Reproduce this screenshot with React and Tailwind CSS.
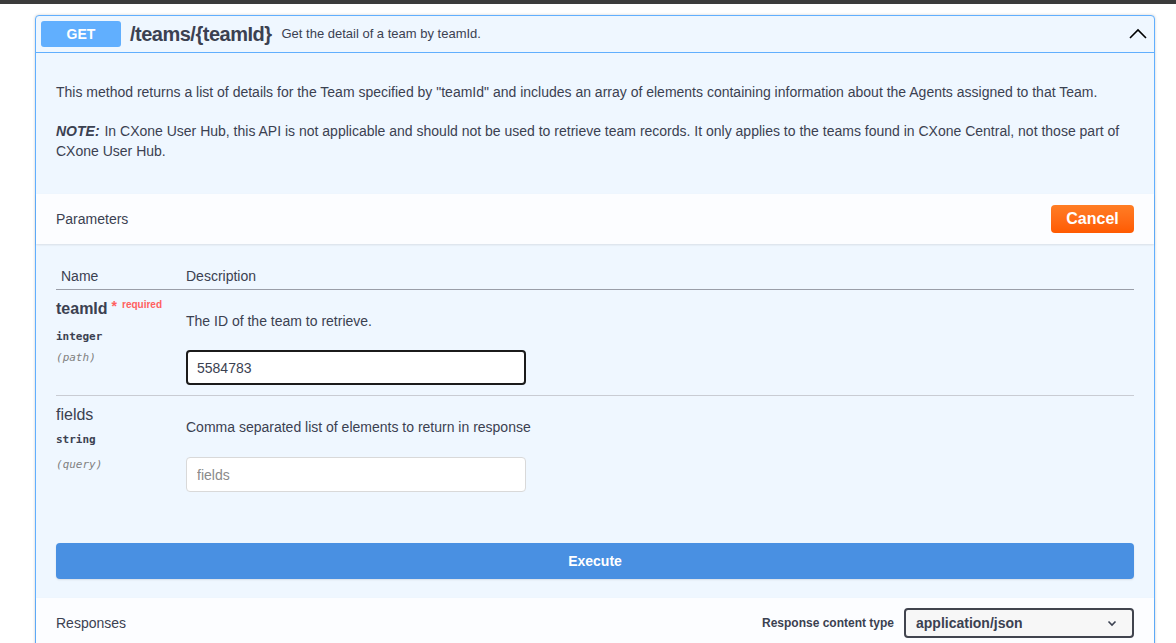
import { useState } from "react";

const ChevronUp = () => (
    <svg width="20" height="20" viewBox="0 0 20 20" className="text-black">
        <path d="M2 14 L10 6 L18 14" fill="none" stroke="currentColor" strokeWidth="1.6" />
    </svg>
);

const ChevronDown = () => (
    <svg width="12" height="12" viewBox="0 0 12 12" className="text-[#3b4151]">
        <path d="M2.5 4.5 L6 8 L9.5 4.5" fill="none" stroke="currentColor" strokeWidth="1.6" />
    </svg>
);

const ParamRow = ({ name, required, type, where, desc, children, border, typeGap, whereGap, inputGap }) => (
    <div className={`flex ${border ? "border-b border-[#c9ccd3]" : ""}`}>
        <div className="w-[130px] shrink-0 pt-[9px] pb-[12px]">
            <div className="flex items-start">
                <span
                    className={`text-[16px] leading-[20px] text-[#3b4151] ${
                        required ? "font-bold" : ""
                    }`}
                >
                    {name}
                </span>
                {required && (
                    <span className="ml-[4px] text-[#ff6060] text-[10px] leading-[10px] font-bold flex">
                        <span className="text-[14px] leading-[14px]">*</span>
                        <span className="ml-[5px] mt-[1px]">required</span>
                    </span>
                )}
            </div>
            <div
                className={`${typeGap} font-['DejaVu_Sans_Mono',monospace] text-[11px] font-bold text-[#3b4151]`}
            >
                {type}
            </div>
            <div
                className={`${whereGap} font-['DejaVu_Sans_Mono',monospace] text-[11px] italic text-[#808080]`}
            >
                ({where})
            </div>
        </div>
        <div className="flex-1 pt-[22px] pb-[10px]">
            <p className="text-[14px] leading-[18px] text-[#3b4151]">{desc}</p>
            <div className={inputGap}>{children}</div>
        </div>
    </div>
);

export default function App() {
    const [teamId, setTeamId] = useState("5584783");
    const [fields, setFields] = useState("");

    return (
        <div className="min-h-screen bg-white font-['Liberation_Sans',Arial,sans-serif] text-[#3b4151]">
            <div className="h-[4px] bg-[#3b3b3b]" />
            <div className="pt-[11px] pl-[35px] w-[1155px]">
                <div className="border border-[#61affe] rounded-[4px] bg-[#eff7ff] shadow-[0_0_3px_rgba(0,0,0,0.19)]">
                    {/* summary */}
                    <div className="flex items-center h-[37px] px-[5px] border-b border-[#61affe]">
                        <div className="w-[80px] h-[26px] rounded-[3px] bg-[#61affe] text-white text-[14px] font-bold flex items-center justify-center">
                            GET
                        </div>
                        <span className="ml-[9px] text-[20px] font-bold tracking-[-0.5px] text-[#3b4151]">
                            /teams/{"{teamId}"}
                        </span>
                        <span className="ml-[10px] text-[13px] text-[#3b4151]">
                            Get the detail of a team by teamId.
                        </span>
                        <div className="ml-auto mr-[1px] flex items-center">
                            <ChevronUp />
                        </div>
                    </div>

                    {/* description */}
                    <div className="px-[20px] pt-[29px] pb-[33px] text-[14px] leading-[20px] text-[#3b4151]">
                        <p>
                            This method returns a list of details for the Team specified by "teamId" and includes an array of elements containing information about the Agents assigned to that Team.
                        </p>
                        <p className="mt-[19px]">
                            <b className="italic pr-[1px]">NOTE:</b> In CXone User Hub, this API is not applicable and should not be used to retrieve team records. It only applies to the teams found in CXone Central, not those part of CXone User Hub.
                        </p>
                    </div>

                    {/* parameters header */}
                    <div className="flex items-center justify-between h-[50px] px-[20px] bg-[#fcfdff] shadow-[0_1px_2px_rgba(0,0,0,0.1)]">
                        <span className="text-[14px] text-[#3b4151]">Parameters</span>
                        <button className="w-[83px] h-[28px] rounded-[4px] bg-gradient-to-b from-[#ff7d24] to-[#ff5a00] text-white text-[16px] font-bold">
                            Cancel
                        </button>
                    </div>

                    {/* parameters table */}
                    <div className="px-[20px] pt-[22px]">
                        <div className="flex border-b border-[#9a9ea8] pb-[2px] text-[14px] text-[#3b4151]">
                            <div className="w-[130px] pl-[5px]">Name</div>
                            <div>Description</div>
                        </div>
                        <ParamRow
                            name="teamId"
                            required
                            type="integer"
                            where="path"
                            desc="The ID of the team to retrieve."
                            border
                            typeGap="mt-[10px]"
                            whereGap="mt-[4px]"
                            inputGap="mt-[20px]"
                        >
                            <input
                                value={teamId}
                                onChange={(e) => setTeamId(e.target.value)}
                                className="w-[340px] h-[35px] px-[9px] border-2 border-[#1b1b1b] rounded-[4px] bg-white text-[14px] text-[#3b4151] outline-none"
                            />
                        </ParamRow>
                        <ParamRow
                            name="fields"
                            type="string"
                            where="query"
                            desc="Comma separated list of elements to return in response"
                            typeGap="mt-[7px]"
                            whereGap="mt-[8px]"
                            inputGap="mt-[21px]"
                        >
                            <input
                                value={fields}
                                onChange={(e) => setFields(e.target.value)}
                                placeholder="fields"
                                className="w-[340px] h-[35px] px-[10px] border border-[#d9d9d9] rounded-[4px] bg-white text-[14px] text-[#3b4151] placeholder:text-[#8a8a8a] outline-none"
                            />
                        </ParamRow>
                    </div>

                    {/* execute */}
                    <div className="px-[20px] pt-[41px] pb-[19px]">
                        <button className="w-full h-[36px] rounded-[4px] bg-[#4990e2] text-white text-[14px] font-bold shadow-[0_1px_2px_rgba(0,0,0,0.1)]">
                            Execute
                        </button>
                    </div>

                    {/* responses header */}
                    <div className="flex items-center justify-between h-[50px] px-[20px] bg-[#fcfdff] shadow-[0_1px_2px_rgba(0,0,0,0.1)]">
                        <span className="text-[14px] text-[#3b4151]">Responses</span>
                        <div className="flex items-center">
                            <span className="text-[12px] font-bold text-[#3b4151] mr-[10px]">
                                Response content type
                            </span>
                            <div className="w-[230px] h-[30px] rounded-[4px] border-2 border-[#41444e] bg-[#f7f7f7] flex items-center justify-between pl-[10px] pr-[14px]">
                                <span className="text-[14px] font-bold text-[#3b4151]">application/json</span>
                                <ChevronDown />
                            </div>
                        </div>
                    </div>
                    <div className="h-[80px]" />
                </div>
            </div>
        </div>
    );
}
